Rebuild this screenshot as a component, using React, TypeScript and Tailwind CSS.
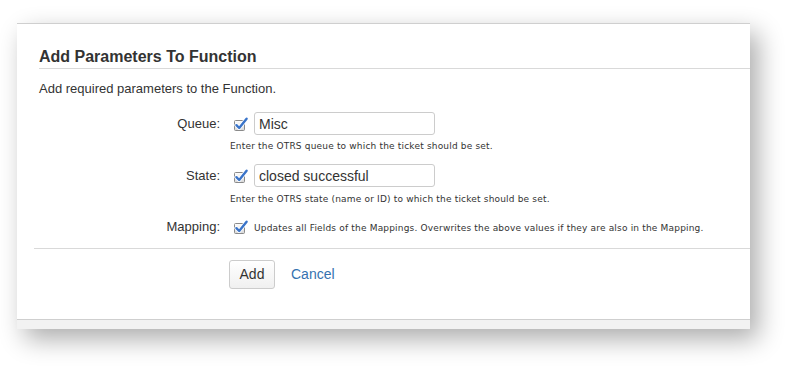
import React from "react";

const CheckIcon = () => (
  <svg width="16" height="16" viewBox="0 0 16 16" className="shrink-0">
    <defs>
      <linearGradient id="cbg" x1="0" y1="0" x2="0" y2="1">
        <stop offset="0" stopColor="#ffffff" />
        <stop offset="1" stopColor="#d6d6d6" />
      </linearGradient>
    </defs>
    <rect x="1.5" y="4.5" width="10" height="10" rx="1" fill="url(#cbg)" stroke="#8a8a8a" />
    <path
      d="M3.4 9.2 L6.2 12 L13.6 2.8"
      fill="none"
      stroke="#ffffff"
      strokeWidth="4"
      strokeLinecap="round"
      strokeLinejoin="round"
    />
    <path
      d="M3.4 9.2 L6.2 12 L13.6 2.8"
      fill="none"
      stroke="#3a74c9"
      strokeWidth="2.4"
      strokeLinecap="round"
      strokeLinejoin="round"
    />
  </svg>
);

const helpCls =
  "text-[9px] leading-[12px] tracking-[0.18px] text-[#333] font-['DejaVu_Sans',sans-serif]";

type RowProps = {
  label: string;
  value?: string;
  inline?: string;
};

const FieldRow = ({ label, value, inline }: RowProps) => (
  <div className="flex items-center">
    <div className="w-[181px] text-right text-[13px] text-[#333]">{label}</div>
    <div className="ml-[13px] flex items-center">
      <CheckIcon />
      {value !== undefined ? (
        <input
          readOnly
          value={value}
          className="ml-[5px] h-[23px] w-[181px] rounded-[3px] border border-[#ccc] bg-white px-[4px] text-[14px] text-[#333] outline-none font-['Liberation_Sans',Arial,sans-serif]"
        />
      ) : (
        <span className={`ml-[5px] mt-[2px] ${helpCls}`}>{inline}</span>
      )}
    </div>
  </div>
);

export default function App() {
  return (
    <div className="h-[377px] w-[798px] overflow-hidden bg-white font-['Liberation_Sans',Arial,sans-serif]">
      <div className="pl-[17px] pt-[23px]">
        <div className="w-[733px] bg-white shadow-[8px_10px_24px_rgba(0,0,0,0.33)]">
          <div className="border-t border-[#cfcfcf]">
            {/* Titre */}
            <div className="ml-[22px] border-b border-[#d9d9d9] pt-[22px]">
              <h2 className="text-[16px] font-bold leading-[22px] text-[#333]">
                Add Parameters To Function
              </h2>
            </div>

            <div className="pl-[22px]">
              <p className="mt-[11px] text-[13px] leading-[18px] text-[#333]">
                Add required parameters to the Function.
              </p>
            </div>

            <div className="mt-[14px] pl-[22px]">
              <FieldRow label="Queue:" value="Misc" />
              <p className={`ml-[191px] mt-[5px] ${helpCls}`}>
                Enter the OTRS queue to which the ticket should be set.
              </p>

              <div className="mt-[12px]">
                <FieldRow label="State:" value="closed successful" />
              </div>
              <p className={`ml-[191px] mt-[6px] ${helpCls}`}>
                Enter the OTRS state (name or ID) to which the ticket should be set.
              </p>

              <div className="mt-[12px]">
                <FieldRow
                  label="Mapping:"
                  inline="Updates all Fields of the Mappings. Overwrites the above values if they are also in the Mapping."
                />
              </div>
            </div>

            {/* Actions */}
            <div className="ml-[17px] mt-[11px] border-t border-[#d9d9d9]" />
            <div className="flex items-center pb-[30px] pl-[212px] pt-[11px]">
              <button className="h-[29px] w-[46px] rounded-[3px] border border-[#ccc] bg-gradient-to-b from-white to-[#f0f0f0] text-[14px] text-[#333]">
                Add
              </button>
              <a className="ml-[16px] text-[14px] text-[#3572b0]">Cancel</a>
            </div>
          </div>
          <div className="h-[10px] border-t border-[#cfcfcf] bg-[#f2f2f2]" />
        </div>
      </div>
    </div>
  );
}
